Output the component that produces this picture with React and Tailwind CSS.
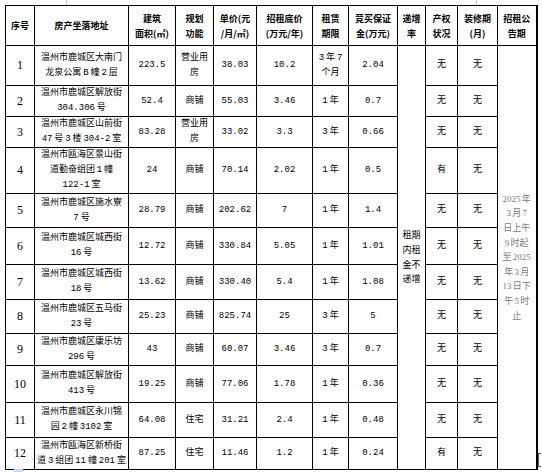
import React from 'react';

const rows = [
  { no: '1', addr: ['温州市鹿城区大南门', '龙泉公寓 B 幢 2 层'], area: '223.5', use: ['营业用', '房'], price: '38.03', base: '10.2', term: ['3 年 7', '个月'], dep: '2.04', right: '无', h: 'h-[40px]' },
  { no: '2', addr: ['温州市鹿城区解放街', '304.306 号'], area: '52.4', use: ['商铺'], price: '55.03', base: '3.46', term: ['1 年'], dep: '0.7', right: '无', h: 'h-[31px]' },
  { no: '3', addr: ['温州市鹿城区山前街', '47 号 3 楼 304-2 室'], area: '83.28', use: ['营业用', '房'], price: '33.02', base: '3.3', term: ['3 年'], dep: '0.66', right: '无', h: 'h-[31px]' },
  { no: '4', addr: ['温州市瓯海区景山街', '道勤奋组团 1 幢', '122-1 室'], area: '24', use: ['商铺'], price: '70.14', base: '2.02', term: ['1 年'], dep: '0.5', right: '有', h: 'h-[46px]' },
  { no: '5', addr: ['温州市鹿城区施水寮', '7 号'], area: '28.79', use: ['商铺'], price: '202.62', base: '7', term: ['1 年'], dep: '1.4', right: '无', h: 'h-[34px]' },
  { no: '6', addr: ['温州市鹿城区城西街', '16 号'], area: '12.72', use: ['商铺'], price: '330.84', base: '5.05', term: ['1 年'], dep: '1.01', right: '无', h: 'h-[37px]' },
  { no: '7', addr: ['温州市鹿城区城西街', '18 号'], area: '13.62', use: ['商铺'], price: '330.40', base: '5.4', term: ['1 年'], dep: '1.08', right: '无', h: 'h-[35px]' },
  { no: '8', addr: ['温州市鹿城区五马街', '23 号'], area: '25.23', use: ['商铺'], price: '825.74', base: '25', term: ['3 年'], dep: '5', right: '无', h: 'h-[34px]' },
  { no: '9', addr: ['温州市鹿城区康乐坊', '296 号'], area: '43', use: ['商铺'], price: '60.07', base: '3.46', term: ['3 年'], dep: '0.7', right: '无', h: 'h-[32px]' },
  { no: '10', addr: ['温州市鹿城区解放街', '413 号'], area: '19.25', use: ['商铺'], price: '77.06', base: '1.78', term: ['1 年'], dep: '0.36', right: '无', h: 'h-[37px]' },
  { no: '11', addr: ['温州市鹿城区永川锦', '园 2 幢 3102 室'], area: '64.08', use: ['住宅'], price: '31.21', base: '2.4', term: ['1 年'], dep: '0.48', right: '无', h: 'h-[35px]' },
  { no: '12', addr: ['温州市瓯海区新桥街', '道 3 组团 11 幢 201 室'], area: '87.25', use: ['住宅'], price: '11.46', base: '1.2', term: ['1 年'], dep: '0.24', right: '有', h: 'h-[32px]' },
];

const headers = [
  ['序号'],
  ['房产坐落地址'],
  ['建筑', '面积(㎡)'],
  ['规划', '功能'],
  ['单价(元', '/月/㎡)'],
  ['招租底价', '(万元/年)'],
  ['租赁', '期限'],
  ['竞买保证', '金(万元)'],
  ['递增', '率'],
  ['产权', '状况'],
  ['装修期', '(月)'],
  ['招租公', '告期'],
];

const widths = ['w-[29px]', 'w-[94px]', 'w-[47px]', 'w-[38px]', 'w-[43px]', 'w-[56px]', 'w-[36px]', 'w-[49px]', 'w-[28px]', 'w-[32px]', 'w-[40px]', 'w-[39px]'];

const cell = 'border border-black text-center align-middle p-0 overflow-visible';
const txt = "font-['Liberation_Mono','Noto_Sans_CJK_SC',monospace] text-[9px] text-black [word-spacing:-3.5px]";

// each line gets a fixed box so fallback CJK metrics can't stretch rows
const Lines = ({ lines, className = '', lh = 'h-[15px] leading-[15px]' }) => (
  <div className={className}>
    {lines.map((l, i) => (
      <div key={i} className={`whitespace-nowrap ${lh}`}>{l}</div>
    ))}
  </div>
);

export default function App() {
  const notice = ['2025 年', '3 月 7', '日上午', '9 时起', '至 2025', '年 3 月', '13 日下', '午 5 时', '止'];
  const growth = ['租期', '内租', '金不', '递增'];

  return (
    <div className="relative w-[542px] h-[472px] bg-white overflow-hidden pt-[5px] pl-[5px]">
      {/* faint page guides */}
      <div className="absolute left-[66px] top-0 h-[5px] w-px bg-[#c8c8c8]"></div>
      <div className="absolute left-[476px] top-0 h-[5px] w-px bg-[#c8c8c8]"></div>
      <div className="absolute left-[14px] top-[469px] h-[3px] w-[9px] bg-[#c9d6ec]"></div>
      <div className="absolute left-[538px] top-[453px] h-[14px] w-[3px] border border-r-0 border-[#555]"></div>

      <table className="table-fixed border-collapse w-[531px] border-r-2 border-black">
        <colgroup>
          {widths.map((w, i) => (
            <col key={i} className={w} />
          ))}
        </colgroup>
        <thead>
          <tr className="h-[40px]">
            {headers.map((h, i) => (
              <th key={i} className={cell}>
                <Lines
                  lines={h}
                  className="font-['Noto_Sans_CJK_SC',sans-serif] text-[9px] font-bold text-black"
                />
              </th>
            ))}
          </tr>
        </thead>
        <tbody>
          {rows.map((r, i) => (
            <tr key={r.no} className={r.h}>
              <td className={cell}>
                <Lines lines={[r.no]} className="font-['Liberation_Serif',serif] text-[12px] text-black" />
              </td>
              <td className={cell}>
                <Lines lines={r.addr} className={txt} />
              </td>
              <td className={cell}>
                <Lines lines={[r.area]} className={txt} />
              </td>
              <td className={cell}>
                <Lines lines={r.use} className={txt} />
              </td>
              <td className={cell}>
                <Lines lines={[r.price]} className={txt} />
              </td>
              <td className={cell}>
                <Lines lines={[r.base]} className={txt} />
              </td>
              <td className={cell}>
                <Lines lines={r.term} className={txt} />
              </td>
              <td className={cell}>
                <Lines lines={[r.dep]} className={txt} />
              </td>
              {i === 0 && (
                <td rowSpan={12} className={cell}>
                  <Lines
                    lines={growth}
                    lh="h-[14.6px] leading-[14.6px]"
                    className="font-['Noto_Sans_CJK_SC',sans-serif] text-[9px] text-black"
                  />
                </td>
              )}
              <td className={cell}>
                <Lines lines={[r.right]} className={txt} />
              </td>
              <td className={cell}>
                <Lines lines={['无']} className={txt} />
              </td>
              {i === 0 && (
                <td rowSpan={12} className={`${cell} border-r-2`}>
                  <Lines
                    lines={notice}
                    lh="h-[14.6px] leading-[14.6px]"
                    className="font-['Liberation_Serif','Noto_Sans_CJK_SC',serif] text-[9px] text-[#7a7a7a] [word-spacing:-1px]"
                  />
                </td>
              )}
            </tr>
          ))}
        </tbody>
      </table>
    </div>
  );
}
